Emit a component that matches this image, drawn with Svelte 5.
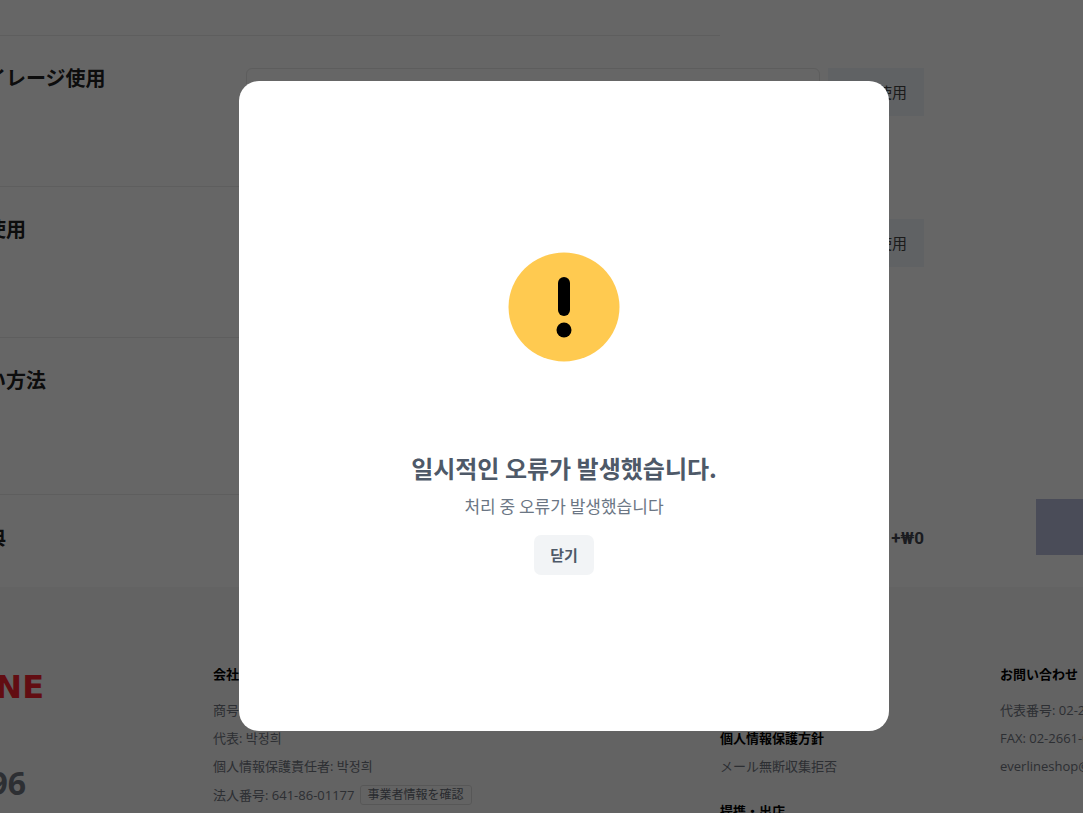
<script>
  let showError = true;

  const sections = [
    { title: 'マイレージ使用', action: '全額使用', height: 150 },
    { title: '券使用', action: '全額使用', height: 150 },
    { title: '払い方法', height: 156 },
    { title: '特典', price: '+₩0', height: 92 }
  ];

  function closeError() {
    showError = false;
  }
</script>

<div class="page">
  <div class="order">
    <main>
      {#each sections as section}
        <hr />
        <section style="height: {section.height}px">
          <h2>{section.title}</h2>
          {#if section.action}
            <div class="field">
              <input type="text" aria-label={section.title} />
              <button class="use">{section.action}</button>
            </div>
          {/if}
          {#if section.price}
            <strong class="price">{section.price}</strong>
          {/if}
        </section>
      {/each}
    </main>
    <aside>
      <button class="pay" aria-label="注文する"></button>
    </aside>
  </div>

  <footer>
    <div class="brand">
      <div class="logo">EVERLINE</div>
      <div class="phone">96</div>
    </div>
    <div class="column">
      <h3>会社情報</h3>
      <p>商号: EVERLINE</p>
      <p>代表: 박정희</p>
      <p>個人情報保護責任者: 박정희</p>
      <p class="license">法人番号: 641-86-01177 <button class="check">事業者情報を確認</button></p>
    </div>
    <div class="column">
      <h3>規約</h3>
      <p><a href="#terms">利用規約</a></p>
      <p><a class="strong" href="#privacy">個人情報保護方針</a></p>
      <p><a href="#email">メール無断収集拒否</a></p>
      <h3 class="second">提携・出店</h3>
    </div>
    <div class="column">
      <h3>お問い合わせ</h3>
      <p>代表番号: 02-2661-0</p>
      <p>FAX: 02-2661-0</p>
      <p>everlineshop@</p>
    </div>
  </footer>
</div>

{#if showError}
  <div class="overlay">
    <div class="modal" role="alertdialog" aria-labelledby="error-title">
      <svg width="112" height="110" viewBox="0 0 112 110" aria-hidden="true">
        <ellipse cx="56" cy="55" rx="55.5" ry="54.5" fill="#ffca50" />
        <rect x="50" y="25" width="12" height="39" rx="6" />
        <circle cx="56" cy="78" r="7.5" />
      </svg>
      <h1 id="error-title">일시적인 오류가 발생했습니다.</h1>
      <p>처리 중 오류가 발생했습니다</p>
      <button on:click={closeError}>닫기</button>
    </div>
  </div>
{/if}

<style>
  :global(body) {
    overflow: hidden;
    font-family: "Open Sans", "Noto Sans CJK JP", "Noto Sans CJK KR", sans-serif;
    background: #fff;
  }

  h1, h2, h3, p {
    margin: 0;
  }

  button {
    font-family: inherit;
    border: none;
    padding: 0;
    cursor: pointer;
  }

  .page {
    height: 100vh;
    overflow: hidden;
    display: flex;
    flex-direction: column;
  }

  .order {
    display: flex;
    gap: 112px;
    margin-left: -34px;
    padding-top: 35px;
  }

  main {
    flex: 1;
  }

  hr {
    margin: 0 204px 0 0;
    border: none;
    border-top: 1px solid #eaeaea;
  }

  section {
    display: flex;
    box-sizing: border-box;
    padding-top: 32px;
  }

  h2 {
    flex: 0 0 280px;
    font-size: 20px;
    line-height: 22px;
    color: #222;
    white-space: nowrap;
  }

  .field {
    flex: 1;
    display: flex;
    gap: 8px;
    height: 48px;
  }

  .field input {
    flex: 1;
    min-width: 0;
    box-sizing: border-box;
    border: 1px solid #e8e8e8;
    border-radius: 6px;
    background: #fff;
  }

  .use {
    width: 96px;
    padding: 0 0 2px 2px;
    font-size: 15px;
    color: #444;
    background: #f1f4f9;
  }

  .price {
    margin-left: auto;
    font-family: Roboto, "Noto Sans CJK KR", sans-serif;
    font-size: 17px;
    line-height: 22px;
    color: #444850;
  }

  aside {
    flex: 0 0 47px;
    display: flex;
    align-items: flex-end;
    padding-bottom: 32px;
  }

  .pay {
    flex: 1;
    height: 56px;
    background: #b8bfdc;
  }

  footer {
    flex: 1;
    display: grid;
    grid-template-columns: 213px 507px 280px 1fr;
    padding-top: 76px;
    background: #f7f7f7;
    white-space: nowrap;
  }

  .brand {
    width: 44px;
    display: flex;
    flex-direction: column;
    align-items: flex-end;
  }

  .logo {
    font-family: "DejaVu Sans", sans-serif;
    font-size: 32px;
    font-weight: bold;
    line-height: 48px;
    color: #f4222f;
  }

  .phone {
    margin: 48px 18px 0 0;
    font-size: 32px;
    font-weight: bold;
    line-height: 48px;
    color: #70757f;
  }

  h3 {
    margin-bottom: 11px;
    font-size: 13px;
    line-height: 22px;
    color: #000;
  }

  .second {
    margin-top: 20px;
  }

  .column {
    font-size: 13px;
    line-height: 28px;
    color: #70757f;
  }

  .column a {
    color: inherit;
    text-decoration: none;
  }

  .column .strong {
    font-weight: bold;
    color: #000;
  }

  .license {
    display: flex;
    align-items: center;
    gap: 5px;
    line-height: 30px;
  }

  .check {
    height: 20px;
    padding: 0 7px;
    font-size: 12px;
    line-height: 18px;
    color: #666b75;
    background: transparent;
    border: 1px solid #dadada;
    border-radius: 3px;
  }

  .overlay {
    position: fixed;
    inset: 0;
    display: flex;
    align-items: center;
    justify-content: center;
    padding: 0 0 2px 45px;
    background: rgba(0, 0, 0, 0.6);
  }

  .modal {
    box-sizing: border-box;
    width: 650px;
    height: 650px;
    display: flex;
    flex-direction: column;
    align-items: center;
    padding-top: 171px;
    border-radius: 20px;
    background: #fff;
    font-family: "Noto Sans CJK KR", sans-serif;
    text-align: center;
  }

  .modal h1 {
    margin-top: 88px;
    font-size: 24px;
    line-height: 36px;
    color: #4e5968;
  }

  .modal p {
    margin-top: 8px;
    font-size: 17px;
    line-height: 24px;
    color: #6b7684;
  }

  .modal button {
    width: 60px;
    height: 40px;
    margin-top: 17px;
    font-size: 15px;
    font-weight: bold;
    color: #4e5968;
    background: #f2f4f6;
    border-radius: 7px;
  }
</style>
